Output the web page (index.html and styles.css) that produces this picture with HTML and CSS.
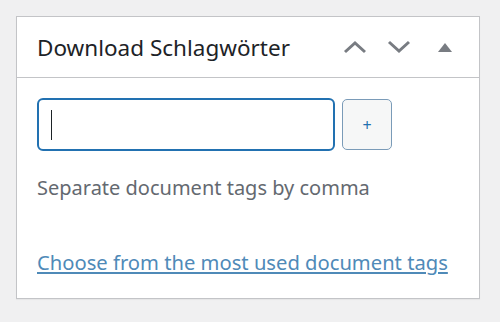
FILE: index.html
```html
<!DOCTYPE html>
<html>
<head>
    <meta charset="UTF-8">
    <title>Download Schlagwörter</title>
    <link rel="stylesheet" href="styles.css">
</head>
<body>
    <div class="postbox">
        <div class="postbox-header">
            <h2 class="hndle">Download Schlagwörter</h2>
            <div class="handle-actions">
                <button class="handle-btn" aria-label="Nach oben">
                    <svg width="24" height="14" viewBox="0 0 24 14"><path d="M2 12 L12 3 L22 12" fill="none" stroke="#787c82" stroke-width="3"/></svg>
                </button>
                <button class="handle-btn" aria-label="Nach unten">
                    <svg width="24" height="14" viewBox="0 0 24 14"><path d="M2 2 L12 11 L22 2" fill="none" stroke="#787c82" stroke-width="3"/></svg>
                </button>
                <button class="handle-btn toggle" aria-label="Umschalten">
                    <svg width="14" height="9" viewBox="0 0 14 9"><path d="M0 9 L7 0 L14 9 Z" fill="#787c82"/></svg>
                </button>
            </div>
        </div>
        <div class="inside">
            <div class="tag-add">
                <div class="newtag"><span class="caret"></span></div>
                <button class="tagadd">+</button>
            </div>
            <p class="howto">Separate document tags by comma</p>
            <a class="tagcloud-link" href="#">Choose from the most used document tags</a>
        </div>
    </div>
</body>
</html>
```

FILE: styles.css
```css
body {
    margin: 0;
    padding: 16px;
    background-color: #f0f0f1;
    font-family: 'Noto Sans', 'Open Sans', sans-serif;
}
.postbox {
    width: 464px;
    height: 283px;
    box-sizing: border-box;
    background-color: #fff;
    border: 1px solid #c3c4c7;
    box-shadow: 0 1px 1px rgba(0, 0, 0, 0.04);
}
.postbox-header {
    display: flex;
    align-items: center;
    justify-content: space-between;
    height: 60px;
    border-bottom: 1px solid #c3c4c7;
}
.hndle {
    margin: 0;
    padding-left: 20px;
    font-size: 22.5px;
    font-weight: normal;
    color: #1d2327;
}
.handle-actions {
    display: flex;
    align-items: center;
    padding-right: 12px;
}
.handle-btn {
    border: 0;
    background: none;
    padding: 0;
    width: 44px;
    height: 40px;
    display: flex;
    align-items: center;
    justify-content: center;
}
.handle-btn.toggle {
    margin-left: 2px;
}
.inside {
    padding: 20px 20px 0;
}
.tag-add {
    display: flex;
    align-items: center;
    gap: 7px;
}
.newtag {
    width: 298px;
    height: 53px;
    box-sizing: border-box;
    border: 2px solid #2271b1;
    border-radius: 6px;
    display: flex;
    align-items: center;
    padding-left: 12px;
}
.caret {
    width: 1px;
    height: 30px;
    background-color: #1d2327;
}
.tagadd {
    width: 50px;
    height: 51px;
    box-sizing: border-box;
    border: 1px solid #7a9bb8;
    border-radius: 5px;
    background-color: #f6f7f7;
    color: #2271b1;
    font-family: 'Noto Sans', sans-serif;
    font-size: 16px;
    padding: 0;
}
.howto {
    margin: 23px 0 0;
    font-size: 20px;
    color: #646970;
}
.tagcloud-link {
    display: inline-block;
    margin-top: 47px;
    font-size: 20.2px;
    color: #4f8ab8;
    text-decoration: underline;
}
```
